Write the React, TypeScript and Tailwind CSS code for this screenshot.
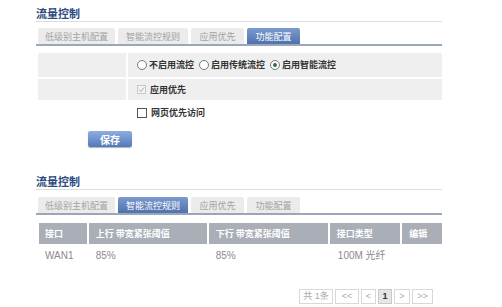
import React from "react";

const font = { fontFamily: '"Noto Sans CJK SC", "Liberation Sans", sans-serif' };

function Tabs({ active }: { active: number }) {
  const tabs = [
    { label: "低级别主机配置", w: "w-[77px]" },
    { label: "智能流控规则", w: "w-[70px]" },
    { label: "应用优先", w: "w-[53px]" },
    { label: "功能配置", w: "w-[53px]" },
  ];
  return (
    <div className="flex gap-[3px] pl-[2px] border-b-2 border-[#9aa7ba] h-[17px] items-end">
      {tabs.map((t, i) => (
        <div
          key={i}
          className={
            t.w +
            " h-[16px] flex items-center justify-center text-[9px] leading-none rounded-t-[2px] " +
            (i === active
              ? "bg-gradient-to-b from-[#7c9bcf] to-[#4f72ad] text-white"
              : "bg-[#ebebeb] text-[#a3a3a3]")
          }
        >
          {t.label}
        </div>
      ))}
    </div>
  );
}

function Radio({ checked, label }: { checked?: boolean; label: string }) {
  return (
    <div className="flex items-center gap-[2px]">
      <div className="w-[10px] h-[10px] rounded-full border border-[#6f7c80] bg-white flex items-center justify-center">
        {checked && <div className="w-[4px] h-[4px] rounded-full bg-[#3d6b4a]" />}
      </div>
      <span className="text-[9px] font-bold text-[#333]">{label}</span>
    </div>
  );
}

export default function App() {
  return (
    <div className="w-[502px] h-[307px] bg-white relative overflow-hidden" style={font}>
      <div className="pl-[36px] w-[442px]">
        {/* Section 1 */}
        <div className="pt-[7px] h-[22px] text-[11px] font-bold text-[#2d4b7d] leading-[12px] border-b border-[#dddddd]">
          流量控制
        </div>
        <div className="mt-[7px]">
          <Tabs active={3} />
        </div>
        <div className="mt-[7px] pl-[2px] flex flex-col gap-[2px]">
          <div className="flex gap-[2px] h-[24px]">
            <div className="w-[88px] bg-[#efefef]" />
            <div className="flex-1 bg-[#efefef] flex items-center gap-[5px] pl-[9px]">
              <Radio label="不启用流控" />
              <Radio label="启用传统流控" />
              <Radio checked label="启用智能流控" />
            </div>
          </div>
          <div className="flex gap-[2px] h-[21px]">
            <div className="w-[88px] bg-[#efefef]" />
            <div className="flex-1 bg-[#efefef] flex items-center gap-[4px] pl-[9px]">
              <div className="w-[9px] h-[9px] border border-[#c8c8c8] bg-[#f4f4f4] flex items-center justify-center">
                <svg width="7" height="7" viewBox="0 0 7 7">
                  <path d="M1 3.5 L3 5.5 L6 1.5" stroke="#a8a8a8" strokeWidth="1" fill="none" />
                </svg>
              </div>
              <span className="text-[9px] font-bold text-[#333]">应用优先</span>
            </div>
          </div>
          <div className="flex gap-[2px] h-[21px]">
            <div className="w-[88px]" />
            <div className="flex-1 flex items-center gap-[4px] pl-[9px]">
              <div className="w-[10px] h-[10px] border border-[#555] bg-white" />
              <span className="text-[9px] font-bold text-[#333]">网页优先访问</span>
            </div>
          </div>
        </div>
        <div className="mt-[8px] pl-[52px]">
          <div className="w-[44px] h-[16px] rounded-[2px] bg-gradient-to-b from-[#8eaee0] to-[#5479b8] text-white text-[10px] font-bold flex items-center justify-center shadow-[0_1px_1px_rgba(0,0,0,0.3)]">
            保存
          </div>
        </div>

        {/* Section 2 */}
        <div className="mt-[28px] h-[15px] text-[11px] font-bold text-[#2d4b7d] leading-[12px] border-b border-[#dddddd]">
          流量控制
        </div>
        <div className="mt-[8px]">
          <Tabs active={1} />
        </div>
        <div className="mt-[8px] pl-[3px]">
          <div className="flex gap-[2px] h-[21px] text-[9px] font-bold text-white">
            <div className="w-[48px] bg-[#a9aeb7] flex items-center pl-[6px]">接口</div>
            <div className="w-[119px] bg-[#a9aeb7] flex items-center pl-[7px]">上行 带宽紧张阈值</div>
            <div className="w-[120px] bg-[#a9aeb7] flex items-center pl-[7px]">下行 带宽紧张阈值</div>
            <div className="w-[71px] bg-[#a9aeb7] flex items-center pl-[7px]">接口类型</div>
            <div className="w-[40px] bg-[#a9aeb7] flex items-center pl-[7px]">编辑</div>
          </div>
          <div className="flex gap-[2px] h-[22px] text-[10px] text-[#8a8a8a] items-center" style={{ fontFamily: '"Liberation Sans", "Noto Sans CJK SC", sans-serif' }}>
            <div className="w-[48px] pl-[6px]">WAN1</div>
            <div className="w-[119px] pl-[7px]">85%</div>
            <div className="w-[120px] pl-[7px]">85%</div>
            <div className="w-[71px] pl-[8px]">100M 光纤</div>
            <div className="w-[40px]" />
          </div>
        </div>
        <div className="mt-[23px] flex justify-end pr-[9px] gap-[2px] text-[9px] text-[#aaa]" style={{ fontFamily: '"Liberation Sans", "Noto Sans CJK SC", sans-serif' }}>
          <div className="w-[34px] h-[15px] border border-[#d8d8d8] flex items-center justify-center">共 1条</div>
          <div className="w-[24px] h-[15px] border border-[#d8d8d8] flex items-center justify-center">&lt;&lt;</div>
          <div className="w-[15px] h-[15px] border border-[#d8d8d8] flex items-center justify-center">&lt;</div>
          <div className="w-[14px] h-[15px] border border-[#c8c8c8] bg-[#e6e6e6] text-[#333] font-bold flex items-center justify-center">1</div>
          <div className="w-[16px] h-[15px] border border-[#d8d8d8] flex items-center justify-center">&gt;</div>
          <div className="w-[21px] h-[15px] border border-[#d8d8d8] flex items-center justify-center">&gt;&gt;</div>
        </div>
      </div>
    </div>
  );
}
